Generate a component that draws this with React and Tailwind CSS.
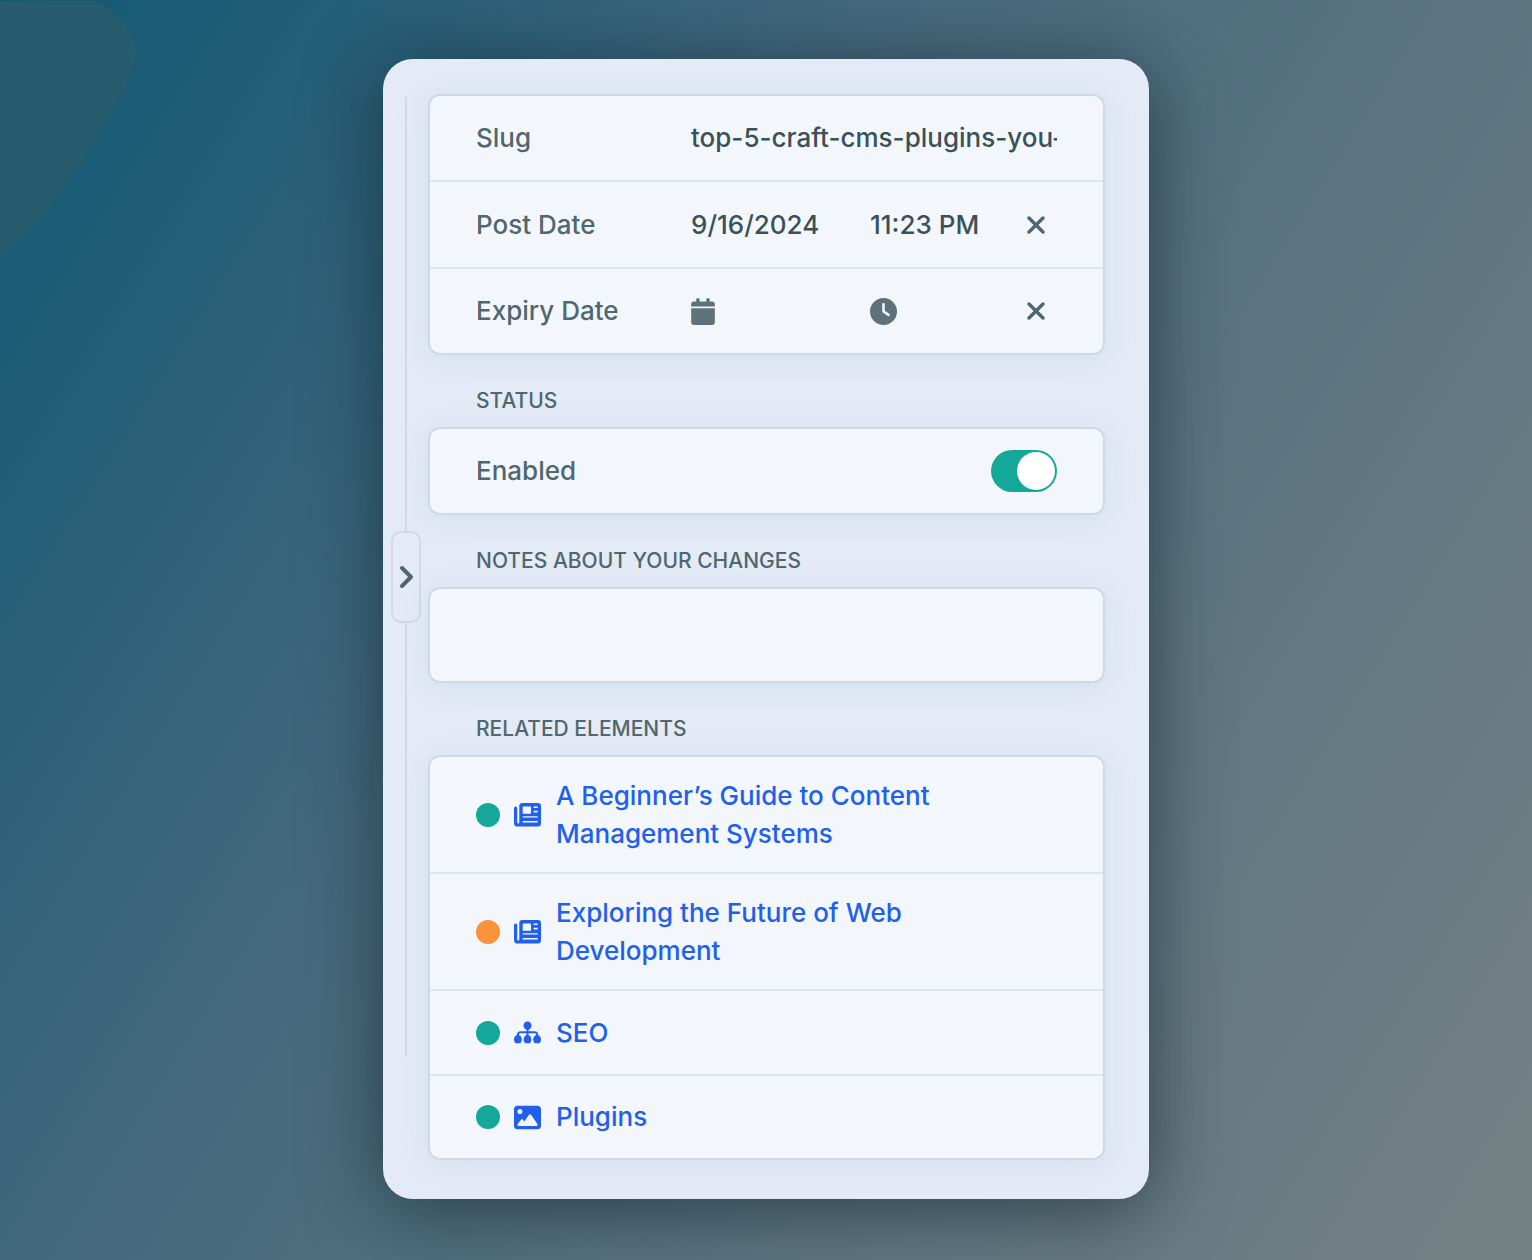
import React, { useState } from 'react';
import { FaImage, FaCalendar, FaClock } from 'react-icons/fa6';

const links = [
  { title: 'A Beginner’s Guide to Content Management Systems', icon: 'news', status: 'live', height: 'h-[117px]' },
  { title: 'Exploring the Future of Web Development', icon: 'news', status: 'pending', height: 'h-[117px]' },
  { title: 'SEO', icon: 'tree', status: 'live', height: 'h-[85px]' },
  { title: 'Plugins', icon: 'image', status: 'live', height: 'h-[82px]' },
];

function TreeIcon() {
  return (
    <svg viewBox="0 0 27 24" className="h-6 w-[27px]" fill="currentColor" aria-hidden="true">
      <path d="M13.5 .6c2.4 0 4 1.800 4 4 0 1.900-1.200 3.700-2.700 4.100h-2.600c-1.500-.4-2.700-2.200-2.700-4.100 0-2.200 1.600-4 4-4Z" />
      <path d="M3.900 14c2.300 0 3.900 2 3.900 4.400 0 1.600-.8 3.200-1.900 3.900h-4C.8 21.600 0 20 0 18.400 0 16 1.600 14 3.900 14Z" />
      <path d="M13.500 14c2.300 0 3.900 2 3.900 4.400 0 1.600-.8 3.200-1.900 3.900h-4c-1.100-.7-1.900-2.300-1.900-3.900 0-2.400 1.600-4.400 3.900-4.400Z" />
      <path d="M23.100 14c2.300 0 3.900 2 3.900 4.400 0 1.600-.8 3.200-1.900 3.900h-4c-1.100-.7-1.900-2.300-1.900-3.900 0-2.400 1.600-4.400 3.900-4.400Z" />
      <path d="M13.500 7v11M3.900 17v-3.300a2.400 2.400 0 0 1 2.400-2.400h14.400a2.400 2.400 0 0 1 2.400 2.400V17" fill="none" stroke="currentColor" strokeWidth="2" />
    </svg>
  );
}

function NewsIcon() {
  return (
    <svg viewBox="0 0 27 24" className="h-6 w-[27px]" fill="currentColor" aria-hidden="true">
      <path
        fillRule="evenodd"
        d="M8.300 0H24a3 3 0 0 1 3 3v17.500a3 3 0 0 1-3 3H3.600A3.600 3.600 0 0 1 0 19.900V5a1.500 1.500 0 0 1 3.200 0v14.500a1 1 0 0 0 2.100 0V3a3 3 0 0 1 3-3ZM9.200 3.400a.5.500 0 0 0-.5.500v6.400a.5.500 0 0 0 .5.500h7.300a.5.500 0 0 0 .5-.5V3.900a.5.500 0 0 0-.5-.5ZM19.600 3.500v1.500h4V3.500ZM19.600 7.800v1.600h4V7.800ZM8.700 13.200v1.300h15V13.200ZM8.700 17.900v1.600h15v-1.600Z"
      />
    </svg>
  );
}

function LinkIcon({ kind }) {
  if (kind === 'tree') return <TreeIcon />;
  if (kind === 'image') return <FaImage className="size-[27px]" aria-hidden="true" />;
  return <NewsIcon />;
}

function Panel({ children }) {
  return (
    <div className="divide-y-2 divide-[#dfe5ed] rounded-xl border-2 border-[#cfd9e5] bg-[#f3f7fc] shadow-[0_4px_28px_rgba(180,195,225,0.35)]">
      {children}
    </div>
  );
}

function Heading({ children, id }) {
  return <h2 id={id} className="px-12 text-[21px] leading-7 text-[#51676f] uppercase">{children}</h2>;
}

function ClearButton({ label }) {
  return (
    <button type="button" aria-label={label} className="ml-auto flex w-[42px] justify-center text-[#51676f]">
      <svg viewBox="0 0 20 20" className="size-5" fill="none" stroke="currentColor" strokeWidth="3.500" strokeLinecap="round" aria-hidden="true">
        <path d="M3 3L17 17M17 3L3 17" />
      </svg>
    </button>
  );
}

export default function App() {
  const [enabled, setEnabled] = useState(true);
  return (
    <main className="relative flex min-h-screen justify-center overflow-hidden bg-[linear-gradient(122deg,#125874_0%,#2a6078_19%,#46697d_38%,#5e7682_68%,#748184_100%)] py-[59px] font-['Inter',sans-serif] text-[26px] leading-[38px] font-[450] text-[#51676f]">
      <svg className="absolute top-0 left-0 h-64 w-36" viewBox="0 0 144 256" aria-hidden="true">
        <path d="M0 1H95Q125 15 135 44Q138 60 128 80L110 115L87 150L82 165L60 190L48 213L2 256H0Z" fill="#275b6e" />
      </svg>
      <div className="relative flex w-1/2 min-w-[740px] self-start rounded-[30px] bg-[#e4ebf6] shadow-[0_10px_76px_0_rgba(15,35,45,0.66)]">
        <div className="flex w-[45px] shrink-0 flex-col items-center pt-[38px] pb-[142px] pl-px">
          <div className="w-0.5 flex-1 bg-[#d0d9e5]" />
          <button type="button" aria-label="Collapse details" className="flex h-[92px] w-[30px] items-center justify-center rounded-[10px] border-2 border-[#d0d9e5]">
            <svg viewBox="0 0 16 26" className="h-[26px] w-4 shrink-0" fill="none" stroke="#51676f" strokeWidth="4" strokeLinecap="round" strokeLinejoin="round" aria-hidden="true">
              <path d="M4 4L13 13L4 22" />
            </svg>
          </button>
          <div className="w-0.5 flex-1 bg-[#d0d9e5]" />
        </div>

        <div className="min-w-0 flex-1 pt-[35px] pr-11 pb-[39px]">
          <Panel>
            <div className="flex h-[86px] items-center px-[46px]">
              <label htmlFor="slug" className="w-[215px] shrink-0">Slug</label>
              <input id="slug" type="text" defaultValue="top-5-craft-cms-plugins-you-need" className="min-w-0 flex-1 bg-transparent text-[#3b515a] outline-none" />
            </div>
            <div className="flex h-[87px] items-center px-[46px]">
              <label htmlFor="post-date" className="w-[215px] shrink-0">Post Date</label>
              <input id="post-date" type="text" defaultValue="9/16/2024" className="w-[179px] bg-transparent text-[#3b515a] outline-none" />
              <input aria-label="Post time" type="text" defaultValue="11:23 PM" className="w-[130px] bg-transparent text-[#3b515a] outline-none" />
              <ClearButton label="Clear post date" />
            </div>
            <div className="flex h-[84px] items-center px-[46px]">
              <span className="w-[215px] shrink-0">Expiry Date</span>
              <button type="button" aria-label="Pick expiry date" className="w-[179px] text-[#5d727b]"><FaCalendar className="h-[27px] w-6" /></button>
              <button type="button" aria-label="Pick expiry time" className="w-[130px] text-[#5d727b]"><FaClock className="size-[27px]" /></button>
              <ClearButton label="Clear expiry date" />
            </div>
          </Panel>

          <div className="mt-8 flex flex-col gap-3">
            <Heading>Status</Heading>
            <Panel>
              <div className="flex h-[84px] items-center justify-between px-[46px]">
                <label htmlFor="enabled">Enabled</label>
                <input
                  id="enabled"
                  type="checkbox"
                  role="switch"
                  checked={enabled}
                  onChange={(e) => setEnabled(e.target.checked)}
                  className="flex h-[42px] w-[66px] cursor-pointer appearance-none items-center rounded-full bg-[#9aa9b5] px-0.5 before:size-[38px] before:rounded-full before:bg-white before:content-[''] checked:justify-end checked:bg-[#14a89a]"
                />
              </div>
            </Panel>
          </div>

          <div className="mt-8 flex flex-col gap-3">
            <Heading id="notes-heading">Notes about your changes</Heading>
            <Panel>
              <textarea aria-labelledby="notes-heading" rows={1} className="block h-[92px] w-full resize-none rounded-xl bg-transparent px-[46px] py-6 outline-none" />
            </Panel>
          </div>

          <section className="mt-8 flex flex-col gap-3" aria-labelledby="related-heading">
            <Heading id="related-heading">Related elements</Heading>
            <Panel>
              {links.map((link) => (
                <div key={link.title} className={`flex items-center px-[46px] ${link.height}`}>
                  <span className={link.status === 'live' ? 'size-6 shrink-0 rounded-full bg-[#14a89a]' : 'size-6 shrink-0 rounded-full bg-[#fb923c]'} />
                  <a href="#" className="flex items-center gap-[15px] pl-[14px] text-[#2160ed]">
                    <span className="shrink-0"><LinkIcon kind={link.icon} /></span>
                    <span className="max-w-[400px]">{link.title}</span>
                  </a>
                </div>
              ))}
            </Panel>
          </section>
        </div>
      </div>
    </main>
  );
}
